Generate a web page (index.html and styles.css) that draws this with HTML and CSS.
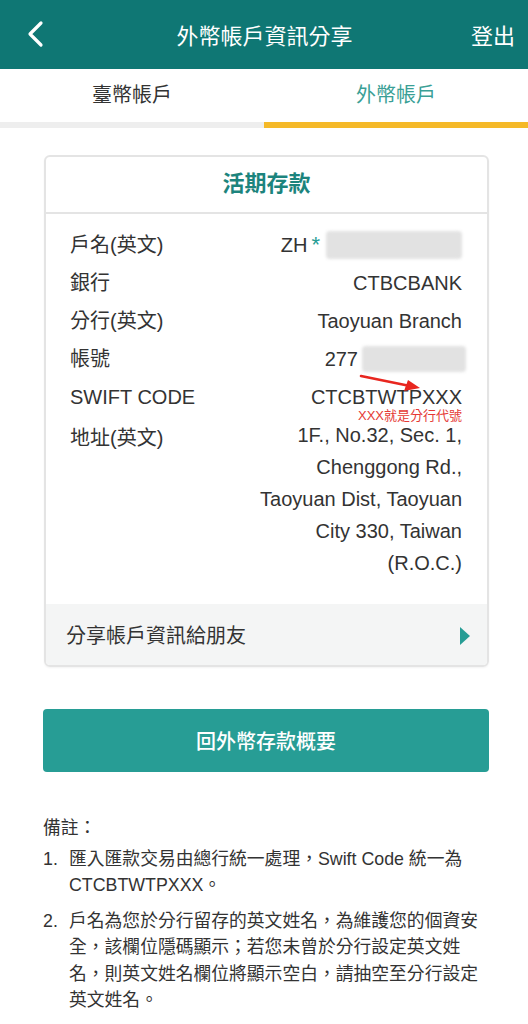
FILE: index.html
```html
<!DOCTYPE html>
<html lang="zh-Hant">
<head>
  <meta charset="UTF-8" />
  <title>外幣帳戶資訊分享</title>
  <link rel="stylesheet" href="styles.css">
</head>
<body>
  <header class="topbar">
    <button class="back" aria-label="返回">
      <svg width="20" height="28" viewBox="0 0 20 28">
        <polyline points="15,3 4,14 15,25" fill="none" stroke="#fff" stroke-width="3.2" stroke-linecap="round" stroke-linejoin="round"/>
      </svg>
    </button>
    <div class="topbar-title">外幣帳戶資訊分享</div>
    <div class="logout">登出</div>
  </header>

  <nav class="tabs">
    <div class="tab">臺幣帳戶</div>
    <div class="tab active">外幣帳戶</div>
  </nav>

  <section class="card">
    <div class="card-head">活期存款</div>
    <div class="card-body">
      <div class="row">
        <span class="label">戶名(英文)</span>
        <span class="value">ZH <span class="star">*</span><span class="mask mask-name"></span></span>
      </div>
      <div class="row">
        <span class="label">銀行</span>
        <span class="value">CTBCBANK</span>
      </div>
      <div class="row">
        <span class="label">分行(英文)</span>
        <span class="value">Taoyuan Branch</span>
      </div>
      <div class="row">
        <span class="label">帳號</span>
        <span class="value">277<span class="mask mask-acct"></span></span>
      </div>
      <div class="row swift">
        <span class="label">SWIFT CODE</span>
        <span class="value">CTCBTWTPXXX</span>
        <svg class="arrow" width="70" height="24" viewBox="0 0 70 24">
          <line x1="3" y1="4" x2="52" y2="14" stroke="#e8261f" stroke-width="2.6" stroke-linecap="round"/>
          <polygon points="62,16 46,19 50,8" fill="#e8261f"/>
        </svg>
        <span class="hint">XXX就是分行代號</span>
      </div>
      <div class="row address">
        <span class="label">地址(英文)</span>
        <span class="value">1F., No.32, Sec. 1,<br>Chenggong Rd.,<br>Taoyuan Dist, Taoyuan<br>City 330, Taiwan<br>(R.O.C.)</span>
      </div>
    </div>
    <div class="card-foot">
      <span>分享帳戶資訊給朋友</span>
      <span class="tri"></span>
    </div>
  </section>

  <button class="primary">回外幣存款概要</button>

  <section class="notes">
    <div class="notes-title">備註：</div>
    <ol>
      <li>匯入匯款交易由總行統一處理，Swift Code 統一為 CTCBTWTPXXX。</li>
      <li>戶名為您於分行留存的英文姓名，為維護您的個資安全，該欄位隱碼顯示；若您未曾於分行設定英文姓名，則英文姓名欄位將顯示空白，請抽空至分行設定英文姓名。</li>
    </ol>
  </section>
</body>
</html>
```

FILE: styles.css
```css
:root {
  --teal-dark: #0f7774;
  --teal:      #279d95;
  --teal-text: #1c847d;
  --yellow:    #f5b928;
  --text:      #333;
  --line:      #e4e4e4;
}

* { margin: 0; padding: 0; box-sizing: border-box; }

body {
  width: 528px;
  background: #fff;
  color: var(--text);
  font-family: "Liberation Sans", "Noto Sans CJK TC", sans-serif;
}

/* header */
.topbar {
  height: 69px;
  background: var(--teal-dark);
  color: #fff;
  display: flex;
  align-items: center;
  padding: 0 13px 2px 26px;
}

.back {
  background: none;
  border: none;
  width: 20px;
  height: 28px;
  display: flex;
}

.topbar-title {
  flex: 1;
  text-align: center;
  font-size: 22px;
  padding-left: 12px;
}

.logout { font-size: 22px; }

/* tabs */
.tabs { display: flex; }

.tab {
  flex: 1;
  height: 59px;
  text-align: center;
  font-size: 20px;
  line-height: 53px;
  color: var(--text);
  border-bottom: 6px solid #eeeeee;
}

.tab.active {
  color: #3a9f96;
  border-bottom-color: var(--yellow);
}

/* account card */
.card {
  margin: 27px 39px 0 44px;
  border: 2px solid var(--line);
  border-radius: 6px;
  overflow: hidden;
  box-shadow: 0 1px 2px rgba(0,0,0,0.05);
}

.card-head {
  height: 57px;
  line-height: 54px;
  text-align: center;
  font-size: 22px;
  font-weight: bold;
  color: var(--teal-text);
  border-bottom: 2px solid var(--line);
}

.card-body {
  padding: 12px 25px 25px 24px;
}

.row {
  display: flex;
  justify-content: space-between;
  align-items: flex-start;
  font-size: 20px;
  line-height: 38px;
  position: relative;
}

.value {
  text-align: right;
  display: flex;
  align-items: center;
  justify-content: flex-end;
}

.star {
  color: var(--teal);
  margin: 0 6px 0 4px;
  font-size: 22px;
}

.mask {
  display: inline-block;
  background: #e2e2e2;
  border-radius: 4px;
  filter: blur(1.5px);
}

.mask-name { width: 136px; height: 28px; }
.mask-acct { width: 104px; height: 26px; margin: 0 -4px 0 4px; }

.swift .arrow {
  position: absolute;
  left: 288px;
  top: -6px;
}

.hint {
  position: absolute;
  right: 0;
  top: 30px;
  font-size: 13px;
  line-height: 16px;
  color: #e53935;
}

.row.address { padding-top: 3px; }
.address .value { display: block; line-height: 32px; }

.card-foot {
  height: 61px;
  background: #f4f5f5;
  display: flex;
  align-items: center;
  justify-content: space-between;
  padding: 0 17px 0 20px;
  font-size: 20px;
}

.tri {
  width: 0;
  height: 0;
  border-top: 9px solid transparent;
  border-bottom: 9px solid transparent;
  border-left: 10px solid var(--teal);
  margin-top: 2px;
}

/* main button */
.primary {
  display: block;
  width: 446px;
  height: 63px;
  margin: 42px 0 0 43px;
  background: var(--teal);
  border: none;
  border-radius: 4px;
  color: #fff;
  font-family: inherit;
  font-size: 20px;
  font-weight: 500;
}

/* notes */
.notes {
  margin: 43px 0 0 43px;
  width: 440px;
  font-size: 17.8px;
  line-height: 26.5px;
}

.notes-title { margin-bottom: 4px; }

.notes ol {
  list-style: none;
  counter-reset: n;
}

.notes li {
  counter-increment: n;
  position: relative;
  padding-left: 26px;
  margin-bottom: 9px;
}

.notes li::before {
  content: counter(n) ".";
  position: absolute;
  left: 0;
}
```
